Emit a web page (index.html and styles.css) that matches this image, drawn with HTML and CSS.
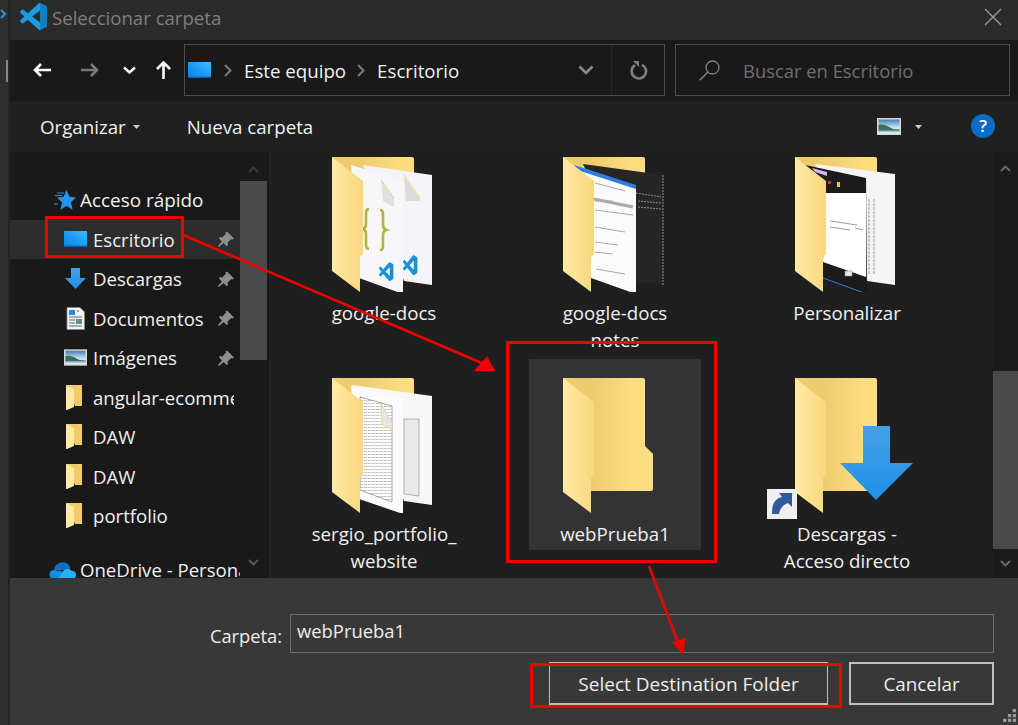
FILE: index.html
```html
<!DOCTYPE html>
<html lang="es">
<head>
<meta charset="utf-8">
<title>Seleccionar carpeta</title>
<link rel="stylesheet" href="styles.css">
</head>
<body>
<svg class="defs" aria-hidden="true">
  <defs>
    <linearGradient id="gBack" x1="0" x2="1" y1="0" y2="0"><stop offset="0.3" stop-color="#eecb6c"/><stop offset="0.75" stop-color="#fbdc7e"/><stop offset="1" stop-color="#fee085"/></linearGradient>
    <linearGradient id="gFront" x1="0" x2="1" y1="0" y2="0"><stop offset="0" stop-color="#ffeaa5"/><stop offset="1" stop-color="#f8d77d"/></linearGradient>
    <linearGradient id="gDesk" x1="0" x2="1" y1="1" y2="0"><stop offset="0" stop-color="#0a84ec"/><stop offset="0.5" stop-color="#1c9cf8"/><stop offset="1" stop-color="#44baff"/></linearGradient>
    <linearGradient id="gArrow" x1="0" x2="0" y1="0" y2="1"><stop offset="0" stop-color="#45a1e6"/><stop offset="1" stop-color="#1f8fe8"/></linearGradient>
    <linearGradient id="gSky" x1="0" x2="0" y1="0" y2="1"><stop offset="0" stop-color="#3f7fb8"/><stop offset="0.55" stop-color="#c7e0ec"/><stop offset="1" stop-color="#dcecf4"/></linearGradient>
    <pattern id="pLines" width="4" height="3" patternUnits="userSpaceOnUse"><rect width="4" height="3" fill="#fff"/><rect y="1" width="3.4" height="1" fill="#c4c4c4"/></pattern>
    <path id="fBack" fill="url(#gBack)" d="M0 0H80q2 0 2 2V68L90 76V111q0 2-2 2H20Z"/>
    <path id="fFront" fill="url(#gFront)" d="M0 0L31 24V97L28 100V135L0 114Z"/>
    <path id="vsc" d="M23.15 2.587L18.21.21a1.494 1.494 0 0 0-1.705.29l-9.46 8.63-4.12-3.128a.999.999 0 0 0-1.276.057L.327 7.261A1 1 0 0 0 .326 8.74L3.899 12 .326 15.26a1 1 0 0 0 .001 1.479L1.65 17.94a.999.999 0 0 0 1.276.057l4.12-3.128 9.46 8.63a1.492 1.492 0 0 0 1.704.29l4.942-2.377A1.5 1.5 0 0 0 24 20.06V3.939a1.5 1.5 0 0 0-.85-1.352zm-5.146 14.861L10.826 12l7.178-5.448v10.896z"/>
    <g id="pin"><path fill="#8b8f93" d="M9 0.5L16 7.5 14.6 8.6 13.4 8 9.6 11.6 10 14 8.800 15.2 5.600 12 1 16 0 15 4 10.400 0.900 7.200 2.100 6 4.400 6.400 8 2.600 7.500 1.500Z"/></g>
    <g id="tinyFolder"><path fill="#f1cb69" d="M0 0H16V21H9Z"/><path fill="#ffe9a3" d="M0 0L8 4V22L1 25H0Z"/></g>
    <g id="landscape"><rect width="24" height="17" fill="#d9d9d9"/><rect x="1.500" y="1.500" width="21" height="14" fill="url(#gSky)"/><path fill="#3f6f5c" d="M1.500 7C6 6 9 7 13 9.500S19 11 22.500 11.500V13H1.500Z"/><path fill="#9cc0d0" d="M1.500 12.500H22.500V14H1.500Z"/></g>
    <g id="desk"><rect width="23" height="16" fill="url(#gDesk)"/><rect y="14.600" width="23" height="1.400" fill="#0c5fae"/></g>
  </defs>
</svg>

<div class="backdrop">
  <svg class="back-chevron" width="8" height="10" viewBox="0 0 8 10"><path d="M1 1l4 4-4 4" fill="none" stroke="#2e8fc9" stroke-width="2.400"/></svg>
  <span class="back-tick"></span>
</div>

<main class="window">
  <header class="titlebar">
    <svg class="app-logo" width="27" height="27" viewBox="0 0 24 24"><use href="#vsc" fill="#1a9be6"/><path fill="#0f7fc4" d="M17 .2L18.200.2 23.200 2.600A1.500 1.500 0 0 1 24 3.900V20A1.500 1.500 0 0 1 23.200 21.400L18.200 23.800H17C17.600 23.600 18 23 18 22.300V1.700C18 1 17.600.4 17 .2Z"/></svg>
    <span class="title-text">Seleccionar carpeta</span>
    <svg class="close-x" width="18" height="18" viewBox="0 0 18 18"><path d="M1 1l16 16M17 1L1 17" stroke="#9a9a9a" stroke-width="1.400" fill="none"/></svg>
  </header>

  <nav class="navbar">
    <svg class="nav-back" width="18" height="14" viewBox="0 0 18 14"><path d="M8 1L2 7l6 6M2 7h16" fill="none" stroke="#fff" stroke-width="2.600"/></svg>
    <svg class="nav-forward" width="18" height="14" viewBox="0 0 18 14"><path d="M10 1l6 6-6 6M16 7H0" fill="none" stroke="#7a7a7a" stroke-width="2.600"/></svg>
    <svg class="nav-down" width="13" height="8" viewBox="0 0 13 8"><path d="M1 1.500l5.500 5 5.500-5" fill="none" stroke="#fff" stroke-width="2.400"/></svg>
    <svg class="nav-up" width="15" height="18" viewBox="0 0 15 18"><path d="M1 8l6.500-6.500L14 8M7.500 2v16" fill="none" stroke="#fff" stroke-width="2.600"/></svg>
    <div class="address">
      <svg class="addr-icon" width="23" height="16" viewBox="0 0 23 16"><use href="#desk"/></svg>
      <svg class="crumb-sep" width="8" height="13" viewBox="0 0 8 13"><path d="M1 1l5.500 5.500L1 12" fill="none" stroke="#777" stroke-width="2.200"/></svg>
      <span class="crumb">Este equipo</span>
      <svg class="crumb-sep" width="8" height="13" viewBox="0 0 8 13"><path d="M1 1l5.500 5.500L1 12" fill="none" stroke="#777" stroke-width="2.200"/></svg>
      <span class="crumb">Escritorio</span>
      <svg class="addr-drop" width="16" height="10" viewBox="0 0 16 10"><path d="M1.500 1.500L8 8l6.500-6.500" fill="none" stroke="#8d8d8d" stroke-width="2.600"/></svg>
      <span class="addr-divider"></span>
      <svg class="addr-refresh" width="18" height="19" viewBox="0 0 18 19"><path d="M5 4.200A7.200 7.200 0 1 0 12 3.800" fill="none" stroke="#7f7f7f" stroke-width="2.600"/><path d="M3 0H9V6Z" fill="#7f7f7f"/></svg>
    </div>
    <div class="search">
      <svg class="search-icon" width="21" height="21" viewBox="0 0 21 21"><circle cx="13.500" cy="7.500" r="6.500" fill="none" stroke="#858585" stroke-width="1.300"/><path d="M8.800 12L.8 20.200" stroke="#858585" stroke-width="1.500"/></svg>
      <span class="search-text">Buscar en Escritorio</span>
    </div>
  </nav>

  <div class="toolbar">
    <span class="tool-label">Organizar</span>
    <svg class="caret" width="7" height="4" viewBox="0 0 7 4"><path d="M0 0h7L3.500 4Z" fill="#cfcfcf"/></svg>
    <span class="tool-label tool-new">Nueva carpeta</span>
    <svg class="view-icon" width="24" height="17" viewBox="0 0 24 17"><use href="#landscape"/></svg>
    <svg class="caret view-caret" width="7" height="4" viewBox="0 0 7 4"><path d="M0 0h7L3.500 4Z" fill="#cfcfcf"/></svg>
    <span class="help">?</span>
  </div>

  <section class="body">
    <aside class="sidebar">
      <div class="tree-row tree-top">
        <svg class="tree-star" width="22" height="22" viewBox="0 0 22 22"><path fill="#2196ec" d="M12.500 1l3 6.800 6.500.8-5 4.700 1.500 7.200-6-3.600-6 3.600 1.500-7.200-5-4.700 6.500-.8Z"/><path stroke="#2196ec" stroke-width="1" d="M3 4H10M1 6.500H8M0 15H4"/></svg>
        <span class="tree-label tree-label-top">Acceso rápido</span>
      </div>
      <div class="tree-row tree-sub tree-active">
        <svg class="tree-icon" width="23" height="16" viewBox="0 0 23 16"><use href="#desk"/></svg>
        <span class="tree-label">Escritorio</span>
        <svg class="tree-pin" width="16" height="16" viewBox="0 0 16 16"><use href="#pin"/></svg>
      </div>
      <div class="tree-row tree-sub">
        <svg class="tree-icon" width="23" height="22" viewBox="0 0 23 22"><path fill="url(#gArrow)" d="M7 0H16V10H22L11.500 21 1 10H7Z"/></svg>
        <span class="tree-label">Descargas</span>
        <svg class="tree-pin" width="16" height="16" viewBox="0 0 16 16"><use href="#pin"/></svg>
      </div>
      <div class="tree-row tree-sub">
        <svg class="tree-icon" width="23" height="23" viewBox="0 0 23 23"><path fill="#f4f4f4" stroke="#888" stroke-width=".8" d="M3 .5H16L20.500 5V22.500H3Z"/><path fill="#2e86d8" d="M5 3H11V8H5Z"/><path stroke="#5a6b7a" stroke-width="1" d="M5 10H18M5 13H11M5 16H11M5 19H18M13 4H15"/><rect x="12" y="12" width="6" height="5" fill="#6d8a88"/></svg>
        <span class="tree-label">Documentos</span>
        <svg class="tree-pin" width="16" height="16" viewBox="0 0 16 16"><use href="#pin"/></svg>
      </div>
      <div class="tree-row tree-sub">
        <svg class="tree-icon" width="23" height="17" viewBox="0 0 24 17"><use href="#landscape"/></svg>
        <span class="tree-label">Imágenes</span>
        <svg class="tree-pin" width="16" height="16" viewBox="0 0 16 16"><use href="#pin"/></svg>
      </div>
      <div class="tree-row tree-sub"><svg class="tree-icon" width="23" height="25" viewBox="-2 0 23 25"><use href="#tinyFolder"/></svg><span class="tree-label">angular-ecommerce</span></div>
      <div class="tree-row tree-sub"><svg class="tree-icon" width="23" height="25" viewBox="-2 0 23 25"><use href="#tinyFolder"/></svg><span class="tree-label">DAW</span></div>
      <div class="tree-row tree-sub"><svg class="tree-icon" width="23" height="25" viewBox="-2 0 23 25"><use href="#tinyFolder"/></svg><span class="tree-label">DAW</span></div>
      <div class="tree-row tree-sub"><svg class="tree-icon" width="23" height="25" viewBox="-2 0 23 25"><use href="#tinyFolder"/></svg><span class="tree-label">portfolio</span></div>
      <div class="tree-row tree-cloud">
        <svg class="tree-cloud-icon" width="27" height="19" viewBox="0 0 27 19"><path fill="#0b6fc4" d="M5 10a8.500 8.500 0 0 1 16-3v3Z"/><path fill="#0e8ee0" d="M5 19a4.500 4.500 0 0 1 0-9l8 1 4 8Z"/><path fill="#2ab0f2" d="M9 19l6-9a6 6 0 0 1 8 1 4 4 0 0 1 0 8Z"/></svg>
        <span class="tree-label">OneDrive - Personal</span>
      </div>
    </aside>
    <div class="side-scroll">
      <svg class="side-up" width="11" height="7" viewBox="0 0 11 7"><path d="M1 6l4.500-4.500L10 6" fill="none" stroke="#3c3c3c" stroke-width="1.800"/></svg>
      <span class="side-thumb"></span>
      <svg class="side-down" width="11" height="7" viewBox="0 0 11 7"><path d="M1 1l4.500 4.500L10 1" fill="none" stroke="#5c5c5c" stroke-width="1.800"/></svg>
    </div>
    <div class="files">
      <div class="grid">
        <figure class="item">
          <svg class="item-icon" width="172" height="135" viewBox="-34 0 172 135">
            <use href="#fBack"/>
            <path fill="#f4f4f6" d="M31 8L100 18V128L72 124Z"/>
            <path fill="#dadada" d="M72 20L88 42V44H74Z"/>
            <path fill="none" stroke="#f2d27c" stroke-width="1" d="M72 18L88 41"/>
            <use href="#vsc" fill="#1a8fdc" transform="translate(71 98) scale(.6 .85)"/>
            <path fill="#f7f7f9" d="M19 8L71 24V137L27 121Z"/>
            <path fill="#e0e0e0" d="M49 24L62 41V50L51 44Z"/>
            <path fill="none" stroke="#f2d27c" stroke-width="1" d="M49 23L62 41"/>
            <path fill="none" stroke="#b6b33c" stroke-width="2.600" d="M37 52q-3 0-3 4v11q0 4-3 5 3 1 3 5v11q0 4 3 4M48 53q3 0 3 4v11q0 4 3 5-3 1-3 5v11q0 4-3 4"/>
            <use href="#vsc" fill="#1a8fdc" transform="translate(47 105) scale(.6 .8)"/>
            <use href="#fFront"/>
          </svg>
          <figcaption class="item-label">google-docs</figcaption>
        </figure>
        <figure class="item">
          <svg class="item-icon" width="172" height="135" viewBox="-34 0 172 135">
            <use href="#fBack"/>
            <path fill="#262626" d="M20 7L100 18V128L73 124Z"/>
            <path stroke="#aaa" stroke-width=".8" stroke-dasharray="2 1" fill="none" d="M100 18V128M73 36L98 40M75 44L98 46M75 50L98 52"/>
            <path fill="#fbfbfb" d="M11 8L73 29V137L28 121Z"/>
            <path fill="#2b7de0" d="M11 8L73 28V32L14 13Z"/>
            <path stroke="#a8a8a8" stroke-width="1" d="M32 26L62 34M32 44H50M32 53L70 58M32 70L62 75M32 85L55 88M32 95L50 97M33 112L62 117"/>
            <path stroke="#aaa" stroke-width="3" d="M31 42L70 50"/>
            <use href="#fFront"/>
          </svg>
          <figcaption class="item-label">google-docs<br>notes</figcaption>
        </figure>
        <figure class="item">
          <svg class="item-icon" width="172" height="135" viewBox="-34 0 172 135">
            <use href="#fBack"/>
            <path fill="#f4f4f4" d="M20 7L100 17V128L72 124Z"/>
            <path stroke="#999" stroke-width="1" stroke-dasharray="3 1" d="M74 42V118M79 42V118"/>
            <path fill="#1b1b1b" d="M10 8L71 21 72 137 28 121Z"/>
            <path fill="#ffffff" d="M30 36L71 36V120L28 105Z"/>
            <path fill="#d9b3f2" d="M17 11L32 15V19L20 15Z"/>
            <path fill="#d93030" d="M33 24h3v3h-3Z"/>
            <path fill="#f0c63e" d="M42 25h3v5h-3Z"/>
            <path stroke="#9a9a9a" d="M35 64L62 68M35 70L55 73M60 71L68 73"/>
            <path fill="#e8e8e8" stroke="#999" stroke-width=".6" d="M50 114h7v5h-7Z"/>
            <path stroke="#2b7de0" d="M28 121L72 137"/>
            <use href="#fFront"/>
          </svg>
          <figcaption class="item-label">Personalizar</figcaption>
        </figure>
        <figure class="item">
          <svg class="item-icon" width="172" height="135" viewBox="-34 0 172 135">
            <use href="#fBack"/>
            <path fill="#f7f7f7" d="M20 7L100 18V127L72 123Z"/>
            <path fill="#e9e9e9" stroke="#888" stroke-width=".6" d="M72 41L87 41V118L72 116Z"/>
            <path fill="#fbfbfb" d="M19 8L71 21V136L27 121Z"/>
            <path fill="url(#pLines)" stroke="#555" stroke-width=".5" d="M28 19L60 28V124L28 112Z"/>
            <path fill="#e6e6e6" stroke="#f0cf78" stroke-width=".8" d="M49 26L60 45V52L50 46Z"/>
            <use href="#fFront"/>
          </svg>
          <figcaption class="item-label">sergio_portfolio_<br>website</figcaption>
        </figure>
        <figure class="item item-selected">
          <svg class="item-icon" width="172" height="135" viewBox="-34 0 172 135">
            <use href="#fBack"/>
            <use href="#fFront"/>
          </svg>
          <figcaption class="item-label">webPrueba1</figcaption>
        </figure>
        <figure class="item">
          <svg class="item-icon item-icon-tall" width="172" height="160" viewBox="-34 0 172 160">
            <use href="#fBack"/>
            <use href="#fFront"/>
            <path fill="url(#gArrow)" d="M68 48H95V85H118L81 122 45 85H68Z"/>
            <rect x="-28" y="111" width="30" height="30" fill="#f0f0f0"/>
            <path fill="#2e5c9e" d="M-23 136c0-9 2-15 10-17l-3-4H-3V129l-4-4c-5 2-8 5-9 11Z"/>
          </svg>
          <figcaption class="item-label">Descargas -<br>Acceso directo</figcaption>
        </figure>
      </div>
    </div>
    <div class="file-scroll">
      <svg class="file-up" width="11" height="7" viewBox="0 0 11 7"><path d="M1 6l4.500-4.500L10 6" fill="none" stroke="#6d6d6d" stroke-width="1.800"/></svg>
      <span class="file-thumb"></span>
      <svg class="file-down" width="11" height="7" viewBox="0 0 11 7"><path d="M1 1l4.500 4.500L10 1" fill="none" stroke="#6d6d6d" stroke-width="1.800"/></svg>
    </div>
  </section>

  <footer class="footer">
    <div class="name-row">
      <label class="name-label">Carpeta:</label>
      <div class="name-input">webPrueba1</div>
    </div>
    <div class="button-row">
      <button class="btn btn-primary">Select Destination Folder</button>
      <button class="btn btn-cancel">Cancelar</button>
    </div>
    <svg class="grip" width="14" height="14" viewBox="0 0 13 13"><path fill="#9a9a9a" d="M10 1h3v3h-3ZM5.500 5.500h3v3h-3ZM10 5.500h3v3h-3ZM1 10h3v3H1ZM5.500 10h3v3h-3ZM10 10h3v3h-3Z"/></svg>
  </footer>
</main>

<svg class="annotations" width="1018" height="725" viewBox="0 0 1018 725" aria-hidden="true">
  <g fill="none" stroke="#f00000" stroke-width="3">
    <rect x="46.500" y="217.500" width="136" height="39"/>
    <rect x="507.500" y="342.500" width="208" height="219"/>
    <rect x="531.500" y="664.500" width="309" height="42"/>
    <path d="M181 234L484 364" stroke-width="2.600"/>
    <path d="M649 566L679 645" stroke-width="2.600"/>
  </g>
  <path fill="#f00000" d="M495 371H474L487 356ZM683 655L672 642 686 638Z"/>
</svg>
</body>
</html>
```
FILE: styles.css
```css
* { box-sizing: border-box; }
html, body { margin: 0; padding: 0; }
body {
  width: 1018px;
  height: 725px;
  overflow: hidden;
  display: flex;
  background: #2f2f2f;
  color: #f0f0f0;
  font-family: "Open Sans", "Noto Sans", sans-serif;
  font-size: 18.7px;
}
.defs { position: absolute; width: 0; height: 0; }

.backdrop {
  width: 10px;
  flex: none;
  background: #2f2f2f;
  border-right: 2px solid #242424;
  display: flex;
  flex-direction: column;
  align-items: flex-end;
}
.back-chevron { margin-top: 9px; }
.back-tick { width: 2px; height: 22px; margin-top: 41px; background: #7d8a94; }

.window {
  width: 1008px;
  flex: none;
  display: flex;
  flex-direction: column;
}

.titlebar {
  height: 40px;
  background: #2b2b2b;
  display: flex;
  align-items: center;
  padding-left: 10px;
  padding-right: 16px;
}
.app-logo { margin-top: -7px; margin-right: 5px; }
.title-text { color: #7f7f7f; font-size: 18.6px; margin-top: -6px; }
.close-x { margin-left: auto; margin-top: -6px; }

.navbar {
  height: 61px;
  background: #191919;
  display: flex;
  align-items: center;
  padding-left: 23px;
  padding-bottom: 1px;
}
.nav-back { margin-right: 30px; }
.nav-forward { margin-right: 24px; }
.nav-down { margin-right: 20px; }
.nav-up { margin-right: 13px; }

.address {
  width: 481px;
  height: 52px;
  border: 1px solid #4c4c4c;
  display: flex;
  align-items: center;
  padding-left: 3px;
}
.addr-icon { margin-right: 13px; }
.crumb-sep { margin-right: 12px; }
.crumb { margin-right: 11px; font-size: 18.7px; }
.addr-drop { margin-left: auto; margin-right: 17px; }
.addr-divider { width: 1px; height: 50px; background: #262626; margin-right: 18px; }
.addr-refresh { margin-right: 16px; }

.search {
  width: 335px;
  height: 52px;
  margin-left: 10px;
  border: 1px solid #4c4c4c;
  display: flex;
  align-items: center;
  padding-left: 23px;
}
.search-icon { margin-right: 23px; }
.search-text { color: #6f6f6f; font-size: 18.4px; }

.toolbar {
  height: 51px;
  background: #202020;
  display: flex;
  align-items: center;
  padding-left: 30px;
}
.tool-label { font-size: 18.7px; }
.caret { margin-left: 7px; }
.tool-new { margin-left: 47px; }
.view-icon { margin-left: auto; }
.view-caret { margin-left: 14px; }
.help {
  width: 24px;
  height: 24px;
  margin-left: 49px;
  margin-right: 23px;
  margin-top: -1px;
  border-radius: 50%;
  background: #0a6cc9;
  color: #fff;
  font-size: 17px;
  font-weight: 600;
  line-height: 24px;
  text-align: center;
}

.body {
  height: 426px;
  display: flex;
  background: #191919;
}

.sidebar {
  width: 230px;
  flex: none;
  overflow: hidden;
  padding-top: 28px;
}
.tree-row {
  height: 39.5px;
  display: flex;
  align-items: center;
  white-space: nowrap;
}
.tree-label { flex: 1; min-width: 0; overflow: hidden; font-size: 18.6px; }
.tree-label-top { font-size: 18.9px; }
.tree-top { padding-left: 44px; }
.tree-star { margin-right: 4px; flex: none; }
.tree-sub { padding-left: 54px; padding-right: 6px; }
.tree-icon { margin-right: 6px; flex: none; }
.tree-pin { flex: none; margin-left: 4px; }
.tree-active { background: #2d2d2d; }
.tree-cloud { padding-left: 39px; margin-top: 14px; }
.tree-cloud-icon { margin-right: 4px; flex: none; }

.side-scroll {
  width: 30px;
  flex: none;
  display: flex;
  flex-direction: column;
  border-right: 1px solid #252525;
  padding-top: 14px;
}
.side-up { margin-left: 8px; margin-bottom: 8px; }
.side-thumb { width: 27px; height: 179px; background: #4a4a4a; display: block; }
.side-down { margin-top: auto; margin-left: 8px; margin-bottom: 12px; }

.files {
  width: 723px;
  flex: none;
  background: #1f1f1f;
  overflow: hidden;
}
.grid {
  display: grid;
  grid-template-columns: 231px 232px 172px;
  grid-auto-rows: 191px;
  row-gap: 30px;
  margin-top: -14px;
  padding-left: 28px;
}
.item {
  margin: 0;
  width: 172px;
  padding-top: 19px;
  text-align: center;
}
.item-selected { background: #333333; }
.item-icon { display: block; }
.item-icon-tall { margin-bottom: -25px; }
.item-label {
  margin-top: 8px;
  line-height: 26.5px;
  font-size: 18.7px;
  color: #f0f0f0;
}

.file-scroll {
  width: 25px;
  flex: none;
  background: #1b1b1b;
  display: flex;
  flex-direction: column;
  align-items: center;
  padding-top: 13px;
}
.file-thumb { width: 25px; height: 178px; margin-top: 199px; background: #4a4a4a; display: block; }
.file-down { margin-top: 11px; }

.footer {
  flex: 1;
  background: #383838;
  display: flex;
  flex-direction: column;
  padding-top: 36px;
  padding-right: 24px;
}
.name-row { display: flex; align-items: center; justify-content: flex-end; }
.name-label { font-size: 18.3px; margin-right: 8px; margin-top: 4px; color: #eee; }
.name-input {
  width: 704px;
  height: 39px;
  border: 1px solid #6e6e6e;
  padding-left: 6px;
  line-height: 31px;
  font-size: 18.4px;
  color: #eee;
}
.button-row {
  display: flex;
  justify-content: flex-end;
  margin-top: 9px;
}
.btn {
  height: 43px;
  background: #383838;
  border-style: solid;
  border-color: #bfbfbf;
  border-width: 1px 1px 2px;
  color: #eee;
  font-family: inherit;
  font-size: 19px;
  padding: 0;
}
.btn-primary { width: 279px; margin-right: 21px; border-top-width: 2px; }
.btn-cancel { width: 145px; border-width: 2px; font-size: 18.8px; }
.grip { align-self: flex-end; margin-top: 3px; margin-right: -22px; flex: none; }

.annotations { position: absolute; left: 0; top: 0; pointer-events: none; }
```
